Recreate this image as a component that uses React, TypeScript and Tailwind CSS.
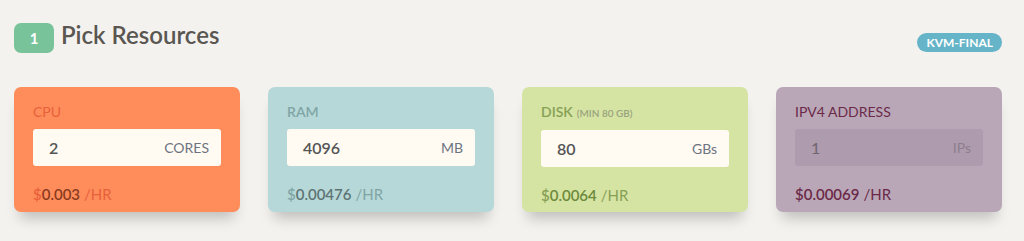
import React from "react";

type Resource = {
  label: string;
  hint?: string;
  value: string;
  unit: string;
  price: string;
  card: string;
  labelColor: string;
  hintColor: string;
  priceColor: string;
  dollarColor: string;
  input: string;
};

const resources: Resource[] = [
  {
    label: "CPU",
    value: "2",
    unit: "CORES",
    price: "0.003",
    card: "bg-[#ff8d5c]",
    labelColor: "text-[#e8613a] font-normal",
    hintColor: "",
    priceColor: "text-[#8a3b1e]",
    dollarColor: "text-[#e8613a]",
    input: "bg-[#fffbf3]",
  },
  {
    label: "RAM",
    value: "4096",
    unit: "MB",
    price: "0.00476",
    card: "bg-[#b7d8d8]",
    labelColor: "text-[#7fa5a5] font-semibold",
    hintColor: "",
    priceColor: "text-[#5e7474]",
    dollarColor: "text-[#7fa5a5]",
    input: "bg-[#fffbf3]",
  },
  {
    label: "DISK",
    hint: "(MIN 80 GB)",
    value: "80",
    unit: "GBs",
    price: "0.0064",
    card: "bg-[#d5e4a3]",
    labelColor: "text-[#87a055] font-semibold",
    hintColor: "text-[#9aa37e]",
    priceColor: "text-[#6d8a3c]",
    dollarColor: "text-[#87a055]",
    input: "bg-[#fffbf3]",
  },
  {
    label: "IPV4 ADDRESS",
    value: "1",
    unit: "IPs",
    price: "0.00069",
    card: "bg-[#b9a7b8]",
    labelColor: "text-[#6b2947] font-normal",
    hintColor: "",
    priceColor: "text-[#6b2947]",
    dollarColor: "text-[#6b2947]",
    input: "bg-[#ae9bad]",
  },
];

function ResourceCard({ r }: { r: Resource }) {
  const muted = r.label === "IPV4 ADDRESS";
  return (
    <div
      className={`${r.card} rounded-[7px] px-[19px] pt-[17px] pb-[8px] shadow-[0_12px_14px_-6px_rgba(0,0,0,0.22)]`}
    >
      <div className={`text-[14px] leading-[16px] ${r.labelColor}`}>
        {r.label}
        {r.hint && <span className={`ml-1 text-[10px] ${r.hintColor}`}>{r.hint}</span>}
      </div>
      <div
        className={`${r.input} mt-[9px] h-[37px] rounded-[3px] flex items-center justify-between pl-[16px] pr-[12px]`}
      >
        <span className={`text-[16px] ${muted ? "text-[#6e6470] font-normal" : "text-[#555] font-semibold"}`}>
          {r.value}
        </span>
        <span className={`text-[14px] ${muted ? "text-[#8c7f8d]" : "text-[#6d7480]"}`}>{r.unit}</span>
      </div>
      <div className="mt-[19px] text-[15px] leading-[18px] font-semibold">
        <span className={r.dollarColor}>$</span>
        <span className={r.priceColor}>{r.price}</span>
        <span className={`${r.dollarColor} ml-1 font-normal`}>/HR</span>
      </div>
    </div>
  );
}

export default function App() {
  return (
    <div
      className="w-[1024px] h-[241px] bg-[#f3f2ef] px-[14px] pt-[23px] overflow-hidden"
      style={{ fontFamily: "Lato, 'Noto Sans', sans-serif" }}
    >
      <div className="flex items-start justify-between pr-[8px]">
        <div className="flex items-center gap-[7px]">
          <div className="w-[40px] h-[30px] rounded-[7px] bg-[#79c39b] flex items-center justify-center text-white text-[15px] font-bold">
            1
          </div>
          <h1 className="text-[24px] font-semibold text-[#5a5651] -mt-[6px]">Pick Resources</h1>
        </div>
        <div className="mt-[10px] h-[19px] px-[9px] rounded-full bg-[#66b4c8] text-white text-[12px] font-bold flex items-center">
          KVM-FINAL
        </div>
      </div>
      <div className="grid grid-cols-4 gap-[28px] mt-[34px] pr-[8px]">
        {resources.map((r) => (
          <ResourceCard key={r.label} r={r} />
        ))}
      </div>
    </div>
  );
}
